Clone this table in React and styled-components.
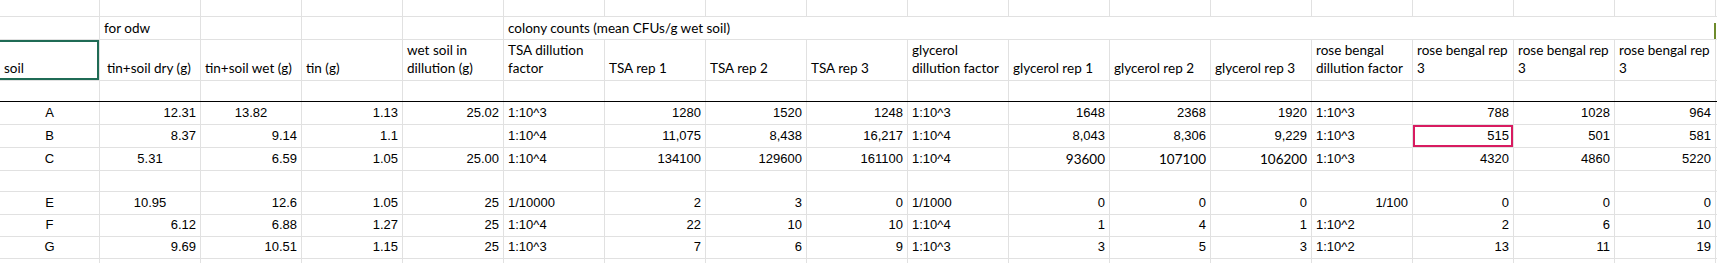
import React from 'react'
import styled, { createGlobalStyle } from 'styled-components'

const GlobalStyle = createGlobalStyle`
  html, body {
    margin: 0;
    padding: 0;
    background: #fff;
  }
  body {
    font-family: "Liberation Sans", Arial, sans-serif;
    color: #000;
    overflow: hidden;
  }
`

const COLS = '100px repeat(16, 101px)'
const GRID = '#e1e1e1'

const Sheet = styled.div`
  display: flex;
  flex-direction: column;
  width: 1717px;
`

const Row = styled.div`
  display: grid;
  grid-template-columns: ${COLS};
  height: ${(p) => p.h}px;
  border-bottom: 1px solid ${(p) => (p.rule ? '#000' : GRID)};
  box-sizing: border-box;
`

const ring = (c, open) =>
  open
    ? `inset 0 2px 0 ${c}, inset -2px 0 0 ${c}, inset 0 -2px 0 ${c}`
    : `inset 0 0 0 2px ${c}`

const Cell = styled.div`
  position: relative;
  display: flex;
  align-items: flex-end;
  justify-content: ${(p) => (p.align === 'right' ? 'flex-end' : p.align === 'center' ? 'center' : 'flex-start')};
  padding: 0 4px 2px 4px;
  border-right: 1px solid ${GRID};
  box-sizing: border-box;
  overflow: visible;
  white-space: nowrap;
  font-family: ${(p) => (p.label ? '"Lato", "Liberation Sans", sans-serif' : '"Liberation Sans", Arial, sans-serif')};
  font-size: ${(p) => (p.label ? '13.5px' : '13px')};
  line-height: 18px;
  box-shadow: ${(p) => (p.mark ? ring(p.mark, p.open) : 'none')};
`

const HeadCell = styled(Cell)`
  line-height: 18px;
  padding-bottom: 3px;
  padding-left: ${(p) => (p.indent ? '7px' : '4px')};
`

const Banner = styled(Cell)`
  grid-column: span 12;
  border-right: none;

  &::after {
    content: '';
    position: absolute;
    right: 0;
    top: 6px;
    width: 2px;
    height: 16px;
    background: #6e8b2c;
  }
`

const heads = [
  ['soil'],
  ['tin+soil dry (g)'],
  ['tin+soil wet (g)'],
  ['tin (g)'],
  ['wet soil in', 'dillution (g)'],
  ['TSA dillution', 'factor'],
  ['TSA rep 1'],
  ['TSA rep 2'],
  ['TSA rep 3'],
  ['glycerol', 'dillution factor'],
  ['glycerol rep 1'],
  ['glycerol rep 2'],
  ['glycerol rep 3'],
  ['rose bengal', 'dillution factor'],
  ['rose bengal rep', '3'],
  ['rose bengal rep', '3'],
  ['rose bengal rep', '3'],
]

const data = [
  { h: 23, cells: ['A', '12.31', { v: '13.82', a: 'center' }, '1.13', '25.02', '1:10^3', '1280', '1520', '1248', '1:10^3', '1648', '2368', '1920', '1:10^3', '788', '1028', '964'] },
  { h: 23, cells: ['B', '8.37', '9.14', '1.1', '', '1:10^4', '11,075', '8,438', '16,217', '1:10^4', '8,043', '8,306', '9,229', '1:10^3', { v: '515', mark: '#d81b60' }, '501', '581'] },
  { h: 23, cells: ['C', { v: '5.31', a: 'center' }, '6.59', '1.05', '25.00', '1:10^4', '134100', '129600', '161100', '1:10^4', { v: '93600', big: true }, { v: '107100', big: true }, { v: '106200', big: true }, '1:10^3', '4320', '4860', '5220'] },
  { h: 21, cells: [] },
  { h: 23, cells: ['E', { v: '10.95', a: 'center' }, '12.6', '1.05', '25', '1/10000', '2', '3', '0', '1/1000', '0', '0', '0', { v: '1/100', a: 'right' }, '0', '0', '0'] },
  { h: 22, cells: ['F', '6.12', '6.88', '1.27', '25', '1:10^4', '22', '10', '10', '1:10^4', '1', '4', '1', '1:10^2', '2', '6', '10'] },
  { h: 22, cells: ['G', '9.69', '10.51', '1.15', '25', '1:10^3', '7', '6', '9', '1:10^3', '3', '5', '3', '1:10^2', '13', '11', '19'] },
]

const blanks = (n) => Array.from({ length: n }, (_, i) => <Cell key={i} />)

const alignFor = (v, i) => {
  if (i === 0) return 'center'
  if (/^1[:/]/.test(v)) return 'left'
  return 'right'
}

const DataRow = ({ h, cells }) => (
  <Row h={h}>
    {cells.length === 0
      ? blanks(17)
      : cells.map((c, i) => {
          const cell = typeof c === 'string' ? { v: c } : c
          return (
            <Cell key={i} align={cell.a || alignFor(cell.v, i)} label={cell.big} mark={cell.mark}>
              {cell.v}
            </Cell>
          )
        })}
  </Row>
)

export default function App() {
  return (
    <Sheet>
      <GlobalStyle />
      <Row h={17}>{blanks(17)}</Row>
      <Row h={23}>
        <Cell />
        <Cell label>for odw</Cell>
        <Cell />
        <Cell />
        <Cell />
        <Banner label>colony counts (mean CFUs/g wet soil)</Banner>
      </Row>
      <Row h={41}>
        {heads.map((lines, i) => (
          <HeadCell key={i} label indent={i === 1} mark={i === 0 ? '#1f6b55' : undefined} open={i === 0}>
            <span>
              {lines[0]}
              {lines[1] && <br />}
              {lines[1]}
            </span>
          </HeadCell>
        ))}
      </Row>
      <Row h={21} rule>{blanks(17)}</Row>
      {data.map((r, i) => (
        <DataRow key={i} {...r} />
      ))}
      <Row h={10}>{blanks(17)}</Row>
    </Sheet>
  )
}
